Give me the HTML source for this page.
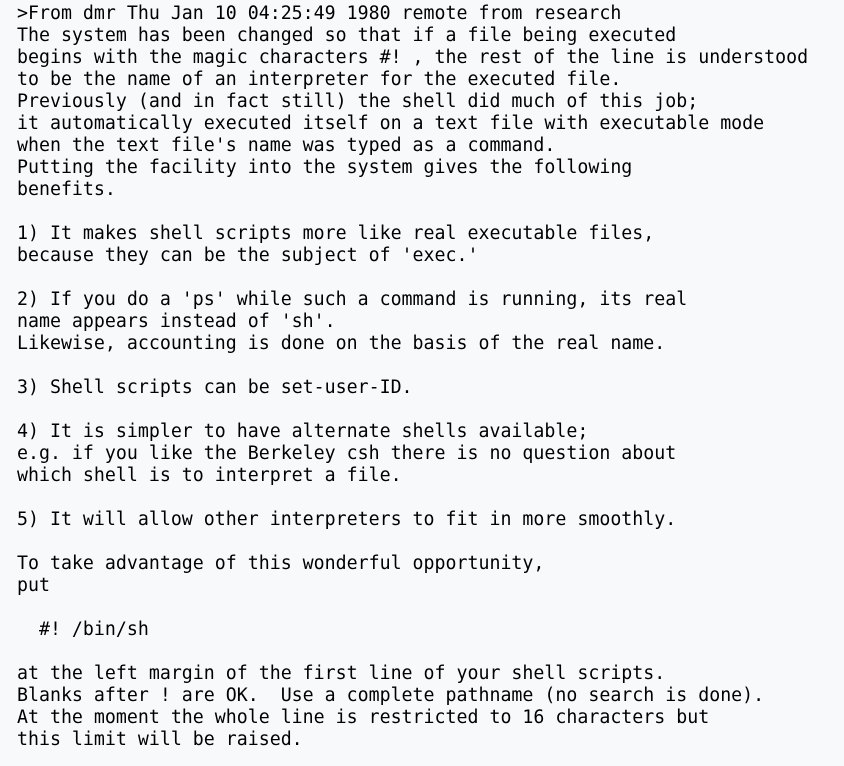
<!DOCTYPE html>
<html><head><meta charset="utf-8"><style>
html,body{margin:0;padding:0;background:#f8f9fb;width:844px;height:766px;overflow:hidden}
pre{margin:0;position:absolute;left:17px;top:3px;font-family:"DejaVu Sans Mono","Liberation Mono",monospace;font-size:18.25px;line-height:22px;color:#000}
</style></head><body><pre>&gt;From dmr Thu Jan 10 04:25:49 1980 remote from research
The system has been changed so that if a file being executed
begins with the magic characters #! , the rest of the line is understood
to be the name of an interpreter for the executed file.
Previously (and in fact still) the shell did much of this job;
it automatically executed itself on a text file with executable mode
when the text file's name was typed as a command.
Putting the facility into the system gives the following
benefits.

1) It makes shell scripts more like real executable files,
because they can be the subject of 'exec.'

2) If you do a 'ps' while such a command is running, its real
name appears instead of 'sh'.
Likewise, accounting is done on the basis of the real name.

3) Shell scripts can be set-user-ID.

4) It is simpler to have alternate shells available;
e.g. if you like the Berkeley csh there is no question about
which shell is to interpret a file.

5) It will allow other interpreters to fit in more smoothly.

To take advantage of this wonderful opportunity,
put

  #! /bin/sh

at the left margin of the first line of your shell scripts.
Blanks after ! are OK.  Use a complete pathname (no search is done).
At the moment the whole line is restricted to 16 characters but
this limit will be raised.</pre></body></html>
